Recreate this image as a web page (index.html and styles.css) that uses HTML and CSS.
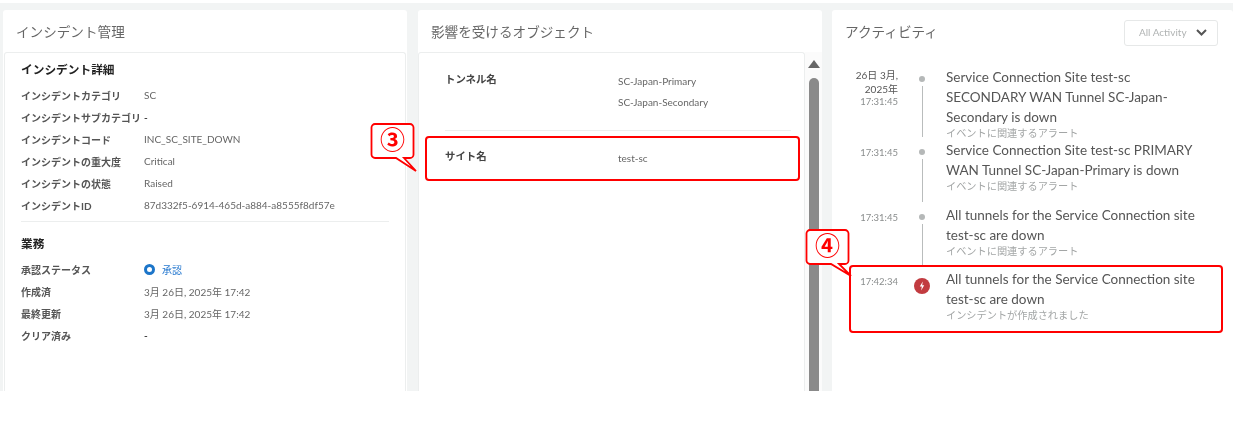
FILE: index.html
```html
<!DOCTYPE html>
<html lang="ja">
<head>
<meta charset="utf-8">
<title>インシデント管理</title>
<link rel="stylesheet" href="styles.css">
</head>
<body>
<main class="stage">
  <section class="panel">
    <h2 class="panel-title">インシデント管理</h2>
    <div class="card details">
      <h3 class="section-title">インシデント詳細</h3>
      <div class="rows">
        <div class="row"><span class="label">インシデントカテゴリ</span><span class="value">SC</span></div>
        <div class="row"><span class="label">インシデントサブカテゴリ</span><span class="value value-dash">-</span></div>
        <div class="row"><span class="label">インシデントコード</span><span class="value">INC_SC_SITE_DOWN</span></div>
        <div class="row"><span class="label">インシデントの重大度</span><span class="value">Critical</span></div>
        <div class="row"><span class="label">インシデントの状態</span><span class="value">Raised</span></div>
        <div class="row"><span class="label">インシデントID</span><span class="value">87d332f5-6914-465d-a884-a8555f8df57e</span></div>
      </div>
      <hr class="rule">
      <h3 class="section-title">業務</h3>
      <div class="rows">
        <div class="row"><span class="label">承認ステータス</span><span class="value status"><i class="status-dot"></i>承認</span></div>
        <div class="row"><span class="label">作成済</span><span class="value">3月 26日, 2025年 17:42</span></div>
        <div class="row"><span class="label">最終更新</span><span class="value">3月 26日, 2025年 17:42</span></div>
        <div class="row"><span class="label">クリア済み</span><span class="value value-dash">-</span></div>
      </div>
    </div>
  </section>

  <section class="panel">
    <h2 class="panel-title">影響を受けるオブジェクト</h2>
    <div class="objects-wrap">
      <div class="card objects">
        <div class="object object-first">
          <span class="object-label">トンネル名</span>
          <div class="object-values"><p>SC-Japan-Primary</p><p>SC-Japan-Secondary</p></div>
        </div>
        <hr class="rule object-rule">
        <div class="object object-second">
          <span class="object-label">サイト名</span>
          <div class="object-values"><p>test-sc</p></div>
        </div>
      </div>
      <div class="scrollbar"><i class="scroll-arrow"></i><i class="scroll-thumb"></i></div>
    </div>
  </section>

  <section class="panel panel-activity">
    <div class="activity-head">
      <h2 class="panel-title">アクティビティ</h2>
      <div class="select">All Activity
        <svg class="chevron" width="11" height="7" viewBox="0 0 11 7"><path d="M1 1l4.500 4.500L10 1" fill="none" stroke="#555" stroke-width="2"/></svg>
      </div>
    </div>
    <ol class="timeline">
      <li class="event event-tight">
        <div class="when"><span class="date">26日 3月,<br>2025年</span><span class="time">17:31:45</span></div>
        <div class="rail"><i class="dot"></i><i class="line"></i></div>
        <div class="what"><p class="msg">Service Connection Site test-sc SECONDARY WAN Tunnel SC-Japan-Secondary is down</p><p class="sub">イベントに関連するアラート</p></div>
      </li>
      <li class="event">
        <div class="when"><span class="time">17:31:45</span></div>
        <div class="rail"><i class="dot"></i><i class="line"></i></div>
        <div class="what"><p class="msg">Service Connection Site test-sc PRIMARY WAN Tunnel SC-Japan-Primary is down</p><p class="sub">イベントに関連するアラート</p></div>
      </li>
      <li class="event">
        <div class="when"><span class="time">17:31:45</span></div>
        <div class="rail"><i class="dot"></i><i class="line"></i></div>
        <div class="what"><p class="msg">All tunnels for the Service Connection site test-sc are down</p><p class="sub">イベントに関連するアラート</p></div>
      </li>
      <li class="event">
        <div class="when"><span class="time">17:42:34</span></div>
        <div class="rail">
          <svg class="alert" width="16" height="16" viewBox="0 0 16 16"><circle cx="8" cy="8" r="8" fill="#c23b40"/><path d="M8.800 3.500L5.800 8.600h2l-.6 3.900 3-5.300H8.200z" fill="#fff"/></svg>
        </div>
        <div class="what"><p class="msg">All tunnels for the Service Connection site test-sc are down</p><p class="sub">インシデントが作成されました</p></div>
      </li>
    </ol>
  </section>

  <div class="mark mark-site"></div>
  <div class="mark mark-event"></div>
  <svg class="callout callout-3" width="48" height="50" viewBox="0 0 48 50">
    <path d="M5 1h35a3.500 3.500 0 0 1 3.500 3.500v27a3.500 3.500 0 0 1-3.500 3.500h-6l12 13-20-13H5a3.500 3.500 0 0 1-3.500-3.500v-27A3.500 3.500 0 0 1 5 1z" fill="#fff" stroke="#f00" stroke-width="1.800"/>
    <text x="22.500" y="26" class="callout-text">③</text>
  </svg>
  <svg class="callout callout-4" width="48" height="50" viewBox="0 0 48 50">
    <path d="M5 1h35a3.500 3.500 0 0 1 3.500 3.500v27a3.500 3.500 0 0 1-3.500 3.500h-6l12 12-20-12H5a3.500 3.500 0 0 1-3.500-3.500v-27A3.500 3.500 0 0 1 5 1z" fill="#fff" stroke="#f00" stroke-width="1.800"/>
    <text x="22.500" y="26" class="callout-text">④</text>
  </svg>
</main>
</body>
</html>
```
FILE: styles.css
```css
* { box-sizing: border-box; }
html, body { margin: 0; padding: 0; background: #fff; }
body {
  width: 1233px;
  height: 427px;
  overflow: hidden;
  font-family: Lato, "Noto Sans CJK JP", sans-serif;
  color: #555;
}
p, h2, h3, ol { margin: 0; padding: 0; }
i { display: block; }

.stage {
  position: relative;
  display: flex;
  gap: 11px;
  height: 388px;
  margin-top: 3px;
  padding: 7px 0 0 3px;
  background: #f2f4f4;
  overflow: hidden;
  filter: blur(0.45px);
}
.panel {
  width: 404px;
  flex: none;
  display: flex;
  flex-direction: column;
  background: #fff;
  border-radius: 3px 3px 0 0;
}
.panel-activity { width: auto; flex: 1; margin-left: -1px; }
.panel-title {
  height: 42px;
  padding: 13px 0 0 13px;
  font-size: 13.600px;
  line-height: 18px;
  font-weight: 400;
  color: #666;
}

.card {
  flex: 1;
  background: #fff;
  border: 1px solid #eceeee;
  border-bottom: 0;
  border-radius: 3px 3px 0 0;
}
.details { margin: 0 1px; padding: 7px 16px 0 16px; }
.section-title {
  font-size: 11.700px;
  line-height: 18px;
  font-weight: 700;
  color: #222;
}
.rows { margin-top: 6px; }
.row { display: flex; height: 22px; align-items: center; }
.label {
  width: 123px;
  flex: none;
  font-size: 10px;
  font-weight: 700;
  white-space: nowrap;
  color: #555;
}
.value { font-size: 10px; color: #666; white-space: nowrap; }
.value-dash { font-weight: 700; color: #444; }
.status { display: flex; align-items: center; color: #2a7bd0; }
.status-dot {
  width: 11px;
  height: 11px;
  margin-right: 7px;
  border: 3px solid #1c75c9;
  border-radius: 50%;
}
.rule { height: 1px; margin: 5px 0 12px; border: 0; background: #eceeee; }

.objects-wrap { flex: 1; display: flex; }
.objects { width: 387px; flex: none; padding: 0 13px 0 26px; }
.object { display: flex; }
.object-first { height: 77px; padding-top: 19px; }
.object-second { padding-top: 18px; }
.object-label {
  width: 173px;
  flex: none;
  font-size: 10.400px;
  line-height: 14px;
  font-weight: 700;
  color: #444;
}
.object-values { margin-top: -1px; }
.object-values p { font-size: 10px; line-height: 21px; color: #666; }
.object-rule { margin: 0; }

.scrollbar { flex: 1; display: flex; flex-direction: column; align-items: center; background: #fbfbfb; }
.scroll-arrow {
  margin-top: 8px;
  width: 0;
  height: 0;
  border-left: 6px solid transparent;
  border-right: 6px solid transparent;
  border-bottom: 8px solid #666;
}
.scroll-thumb { flex: 1; width: 10px; margin-top: 10px; border-radius: 5px 5px 0 0; background: #8a8a8a; }

.activity-head { display: flex; justify-content: space-between; padding-right: 15px; }
.select {
  display: flex;
  align-items: center;
  justify-content: space-between;
  width: 94px;
  height: 26px;
  margin-top: 10px;
  padding: 0 10px 2px 14px;
  border: 1px solid #e6e8e8;
  border-radius: 3px;
  font-size: 10px;
  color: #b0b3b3;
}
.timeline { list-style: none; margin-top: 15px; }
.event { display: flex; padding-left: 13px; }
.when {
  width: 53px;
  flex: none;
  display: flex;
  flex-direction: column;
  text-align: right;
  padding-top: 2px;
}
.date { font-size: 10px; line-height: 13.500px; color: #555; }
.time { font-size: 9.500px; line-height: 12px; color: #8a8d8d; }
.event:not(.event-tight) .time { padding-top: 4px; line-height: 13px; box-sizing: content-box; }
.rail {
  width: 48px;
  flex: none;
  display: flex;
  flex-direction: column;
  align-items: center;
  padding-top: 9px;
}
.dot { width: 6px; height: 6px; border-radius: 50%; background: #b5b8b8; }
.line { flex: 1; width: 1px; margin: 4px 0 3px; background: #b9bcbc; }
.alert { flex: none; }
.what { width: 254px; padding-bottom: 12.500px; }
.event-tight .what { padding-bottom: 1px; }
.msg { font-size: 13.500px; line-height: 20px; color: #555; }
.sub { font-size: 10.200px; line-height: 12px; color: #a3a6a6; }

.mark {
  position: absolute;
  border: 2px solid #f00;
  border-radius: 4px;
}
.mark-site { left: 425px; top: 133px; width: 375px; height: 45px; }
.mark-event { left: 849px; top: 262px; width: 374px; height: 68px; }
.callout { position: absolute; overflow: visible; }
.callout-3 { left: 370px; top: 120px; }
.callout-4 { left: 805px; top: 226px; }
.callout-text {
  font-family: "Noto Sans CJK JP", sans-serif;
  font-size: 25px;
  font-weight: 700;
  fill: #f00;
  text-anchor: middle;
}
```
